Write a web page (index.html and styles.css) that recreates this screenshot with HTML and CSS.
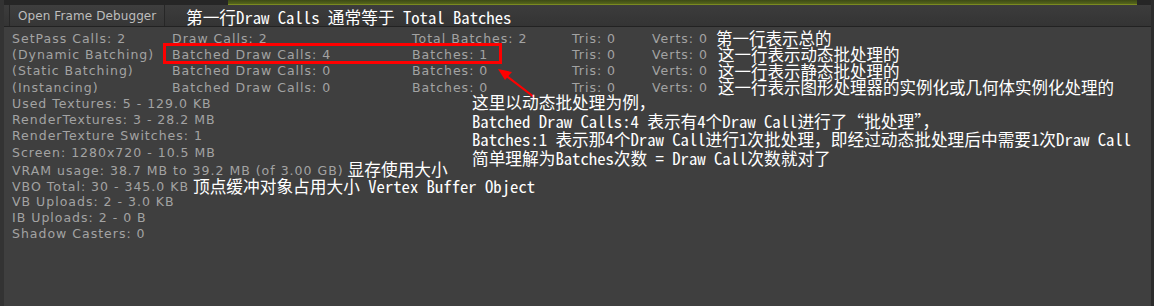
FILE: index.html
```html
<!DOCTYPE html>
<html lang="zh-CN">
<head>
<meta charset="utf-8">
<title>Rendering Statistics</title>
<link rel="stylesheet" href="styles.css">
</head>
<body>
<div class="window">
  <div class="topstrip">
    <div class="mode"></div>
    <div class="graph"></div>
  </div>
  <div class="toolbar">
    <div class="btn">Open Frame Debugger</div>
    <div class="note heading">第一行Draw Calls 通常等于 Total Batches</div>
  </div>
  <div class="panel">
    <div class="stats">
      <span>SetPass Calls: 2</span><span>Draw Calls: 2</span><span>Total Batches: 2</span><span>Tris: 0</span><span>Verts: 0</span><span class="side">第一行表示总的</span>
      <span>(Dynamic Batching)</span><span>Batched Draw Calls: 4</span><span>Batches: 1</span><span>Tris: 0</span><span>Verts: 0</span><span class="side shift">这一行表示动态批处理的</span>
      <span>(Static Batching)</span><span>Batched Draw Calls: 0</span><span>Batches: 0</span><span>Tris: 0</span><span>Verts: 0</span><span class="side shift">这一行表示静态批处理的</span>
      <span>(Instancing)</span><span>Batched Draw Calls: 0</span><span>Batches: 0</span><span>Tris: 0</span><span>Verts: 0</span><span class="side shift">这一行表示图形处理器的实例化或几何体实例化处理的</span>
      <span class="full">Used Textures: 5 - 129.0 KB</span>
      <span class="full">RenderTextures: 3 - 28.2 MB</span>
      <span class="full">RenderTexture Switches: 1</span>
      <span class="full">Screen: 1280x720 - 10.5 MB</span>
      <span class="full">VRAM usage: 38.7 MB to 39.2 MB (of 3.00 GB)<span class="note inline">显存使用大小</span></span>
      <span class="full">VBO Total: 30 - 345.0 KB<span class="note inline vbo">顶点缓冲对象占用大小 Vertex Buffer Object</span></span>
      <span class="full">VB Uploads: 2 - 3.0 KB</span>
      <span class="full">IB Uploads: 2 - 0 B</span>
      <span class="full">Shadow Casters: 0</span>
    </div>
    <div class="redbox"></div>
    <svg class="arrow" width="60" height="40" viewBox="0 0 60 40">
      <line x1="44" y1="35" x2="14" y2="12" stroke="#ff0000" stroke-width="2.2"/>
      <polygon points="8,7 22,10 15,18" fill="#ff0000"/>
    </svg>
    <div class="note callout">
      <div>这里以动态批处理为例，</div>
      <div>Batched Draw Calls:4 表示有4个Draw Call进行了“批处理”，</div>
      <div>Batches:1 表示那4个Draw Call进行1次批处理，即经过动态批处理后中需要1次Draw Call</div>
      <div>简单理解为Batches次数 = Draw Call次数就对了</div>
    </div>
  </div>
</div>
</body>
</html>
```

FILE: styles.css
```css
html, body {
  margin: 0;
  padding: 0;
  background: #3f3f3f;
}

.window {
  width: 1154px;
  height: 306px;
  overflow: hidden;
  display: flex;
  flex-direction: column;
  background: #3f3f3f;
  border-left: 4px solid #333333;
  border-right: 3px solid #2c2c2c;
  box-sizing: border-box;
}

.topstrip {
  height: 5px;
  background: #262626;
  display: flex;
  overflow: hidden;
}

.mode {
  width: 224px;
}

.graph {
  width: 909px;
  background: linear-gradient(#3c4a16, #56661c);
  border-bottom: 1px solid #7a8a20;
  box-sizing: border-box;
}

.toolbar {
  height: 22px;
  display: flex;
  align-items: stretch;
  background: linear-gradient(#3c3c3c, #343434);
  border-bottom: 1px solid #222222;
  box-sizing: border-box;
}

.btn {
  margin-left: 5px;
  width: 156px;
  box-sizing: border-box;
  border-left: 1px solid #272727;
  border-right: 1px solid #272727;
  background: linear-gradient(#3e3e3e, #363636);
  color: #bdbdbd;
  font: 12px "DejaVu Sans", sans-serif;
  letter-spacing: 0.1px;
  display: flex;
  align-items: center;
  padding-left: 8px;
  padding-top: 1px;
}

.note {
  font-family: "Noto Sans Mono CJK SC", "Noto Sans CJK SC", monospace;
  color: #ffffff;
  font-size: 16.7px;
  white-space: nowrap;
}

.heading {
  margin-left: 21px;
  line-height: 21px;
  padding-top: 2px;
}

.panel {
  position: relative;
  flex: 1;
  padding: 3px 0 0 8px;
}

.stats {
  display: grid;
  grid-template-columns: 160px 240px 160px 80px 64px auto;
  grid-auto-rows: 16.3px;
  align-items: center;
  font: 12.5px "DejaVu Sans", sans-serif;
  letter-spacing: 1px;
  color: #a3a3a3;
  white-space: nowrap;
}

.stats .full {
  grid-column: 1 / -1;
}

.side {
  font-family: "Noto Sans CJK SC", sans-serif;
  font-size: 16.5px;
  letter-spacing: 0;
  color: #ffffff;
  line-height: 16px;
}

.side.shift {
  padding-left: 2px;
}

.inline {
  letter-spacing: 0;
  margin-left: 4px;
  line-height: 16px;
  position: relative;
  top: 1px;
}

.inline.vbo {
  top: 2px;
}

.redbox {
  position: absolute;
  left: 159px;
  top: 16px;
  width: 339px;
  height: 21px;
  border: 3px solid #ff0000;
  box-sizing: border-box;
}

.arrow {
  position: absolute;
  left: 486px;
  top: 35px;
}

.callout {
  position: absolute;
  left: 468px;
  top: 66px;
  line-height: 18.7px;
}
```
